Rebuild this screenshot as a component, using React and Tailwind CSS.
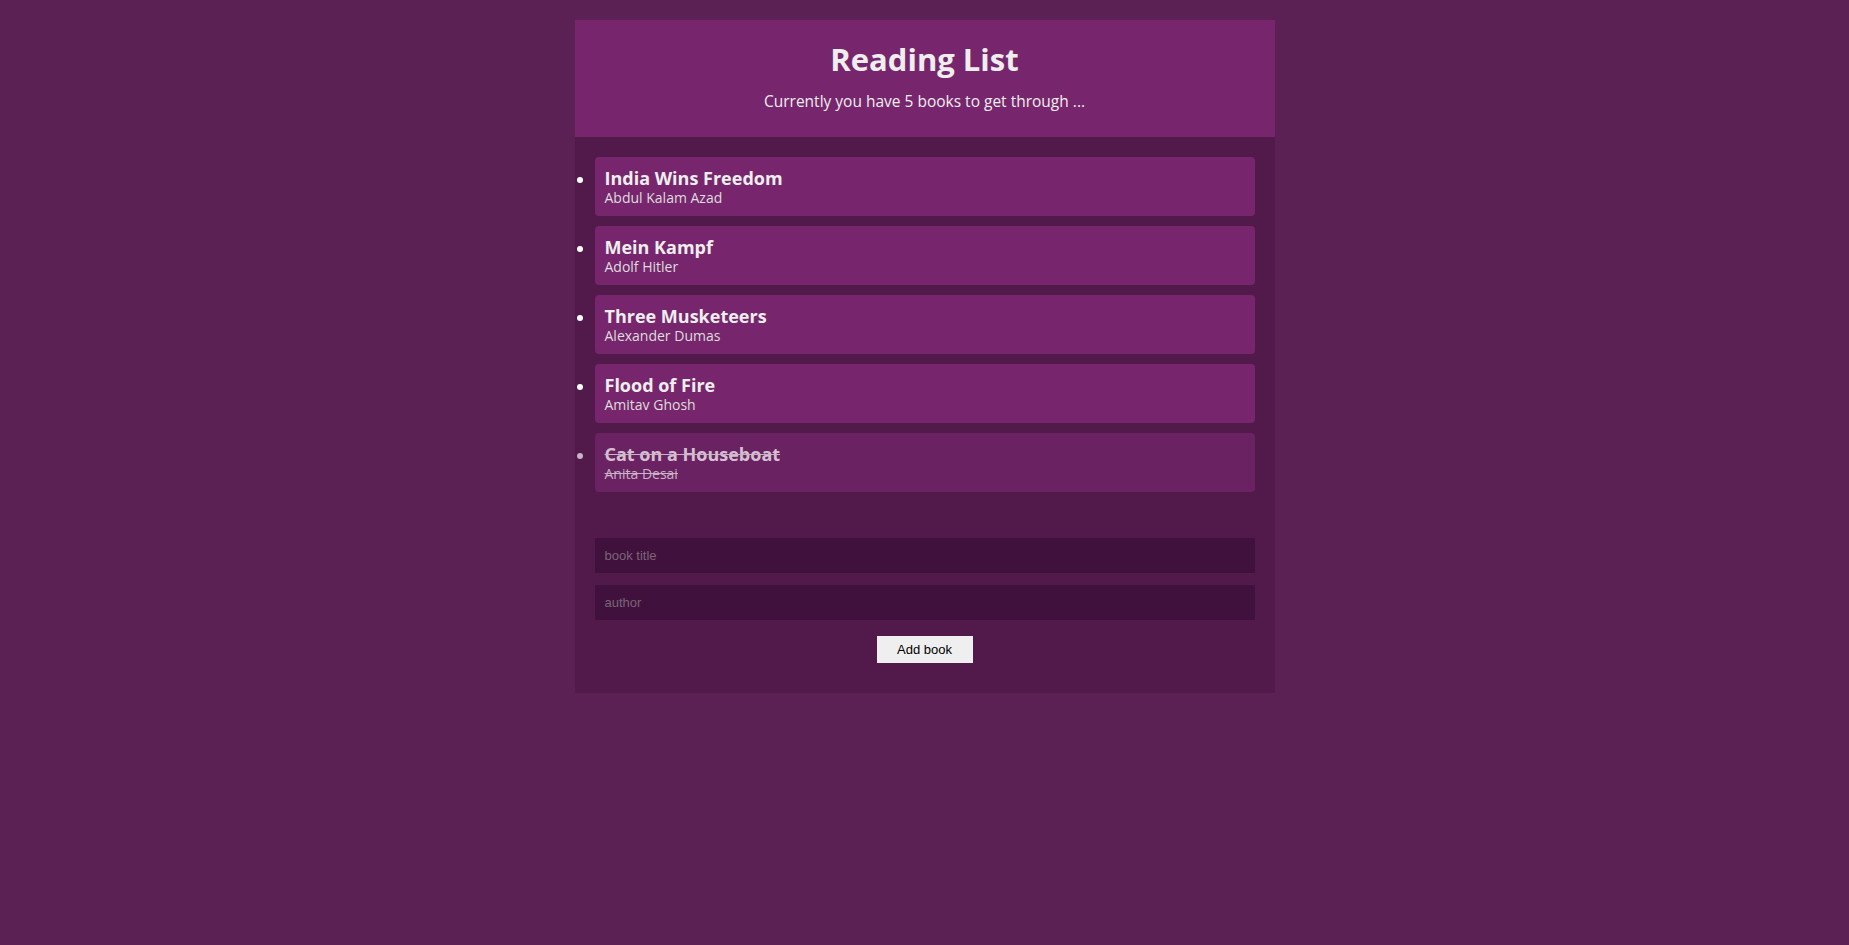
const books = [
  { title: 'India Wins Freedom', author: 'Abdul Kalam Azad', read: false },
  { title: 'Mein Kampf', author: 'Adolf Hitler', read: false },
  { title: 'Three Musketeers', author: 'Alexander Dumas', read: false },
  { title: 'Flood of Fire', author: 'Amitav Ghosh', read: false },
  { title: 'Cat on a Houseboat', author: 'Anita Desai', read: true },
]

export default function App() {
  return (
    <div className="min-h-screen bg-[#5b2054] pt-5 font-['Open_Sans',sans-serif] text-[#eee]">
      <div className="mx-auto w-[700px] bg-[#521a4a]">
        {/* Header */}
        <div className="flex h-[117px] flex-col items-center bg-[#77266d] pt-[17px]">
          <h1 className="m-0 text-[31px] font-bold leading-[44px] text-[#eee]">Reading List</h1>
          <p className="mt-[10px] text-[15.5px] leading-5 text-[#eee]">Currently you have 5 books to get through ...</p>
        </div>

        {/* Book list */}
        <ul className="m-0 list-disc px-5 pt-5 text-white">
          {books.map(b => (
            <li
              key={b.title}
              className={`mb-[10px] h-[59px] rounded-[4px] px-[10px] pt-[10px] ${b.read ? 'bg-[#6a2262] text-[#c9b3c6] line-through' : 'bg-[#77266d]'}`}
            >
              <h3 className={`m-0 text-[18px] font-bold leading-[21px] ${b.read ? 'text-[#d4c0d1]' : 'text-[#eee]'}`}>{b.title}</h3>
              <p className={`m-0 text-[14px] leading-[18px] ${b.read ? 'text-[#c9b3c6]' : 'text-[#ddd]'}`}>{b.author}</p>
            </li>
          ))}
        </ul>

        {/* Add form */}
        <form className="flex flex-col px-5 pt-9 pb-[30px]" onSubmit={e => e.preventDefault()}>
          <input
            type="text"
            placeholder="book title"
            className="mb-3 h-[35px] w-full bg-[#40113c] px-[10px] font-['Liberation_Sans',sans-serif] text-[13px] text-[#ddd] outline-none placeholder:text-[#7a6577]"
          />
          <input
            type="text"
            placeholder="author"
            className="mb-4 h-[35px] w-full bg-[#40113c] px-[10px] font-['Liberation_Sans',sans-serif] text-[13px] text-[#ddd] outline-none placeholder:text-[#7a6577]"
          />
          <button
            type="submit"
            className="mx-auto h-[27px] w-[96px] bg-[#efefef] font-['Liberation_Sans',sans-serif] text-[13px] text-black"
          >
            Add book
          </button>
        </form>
      </div>
    </div>
  )
}
